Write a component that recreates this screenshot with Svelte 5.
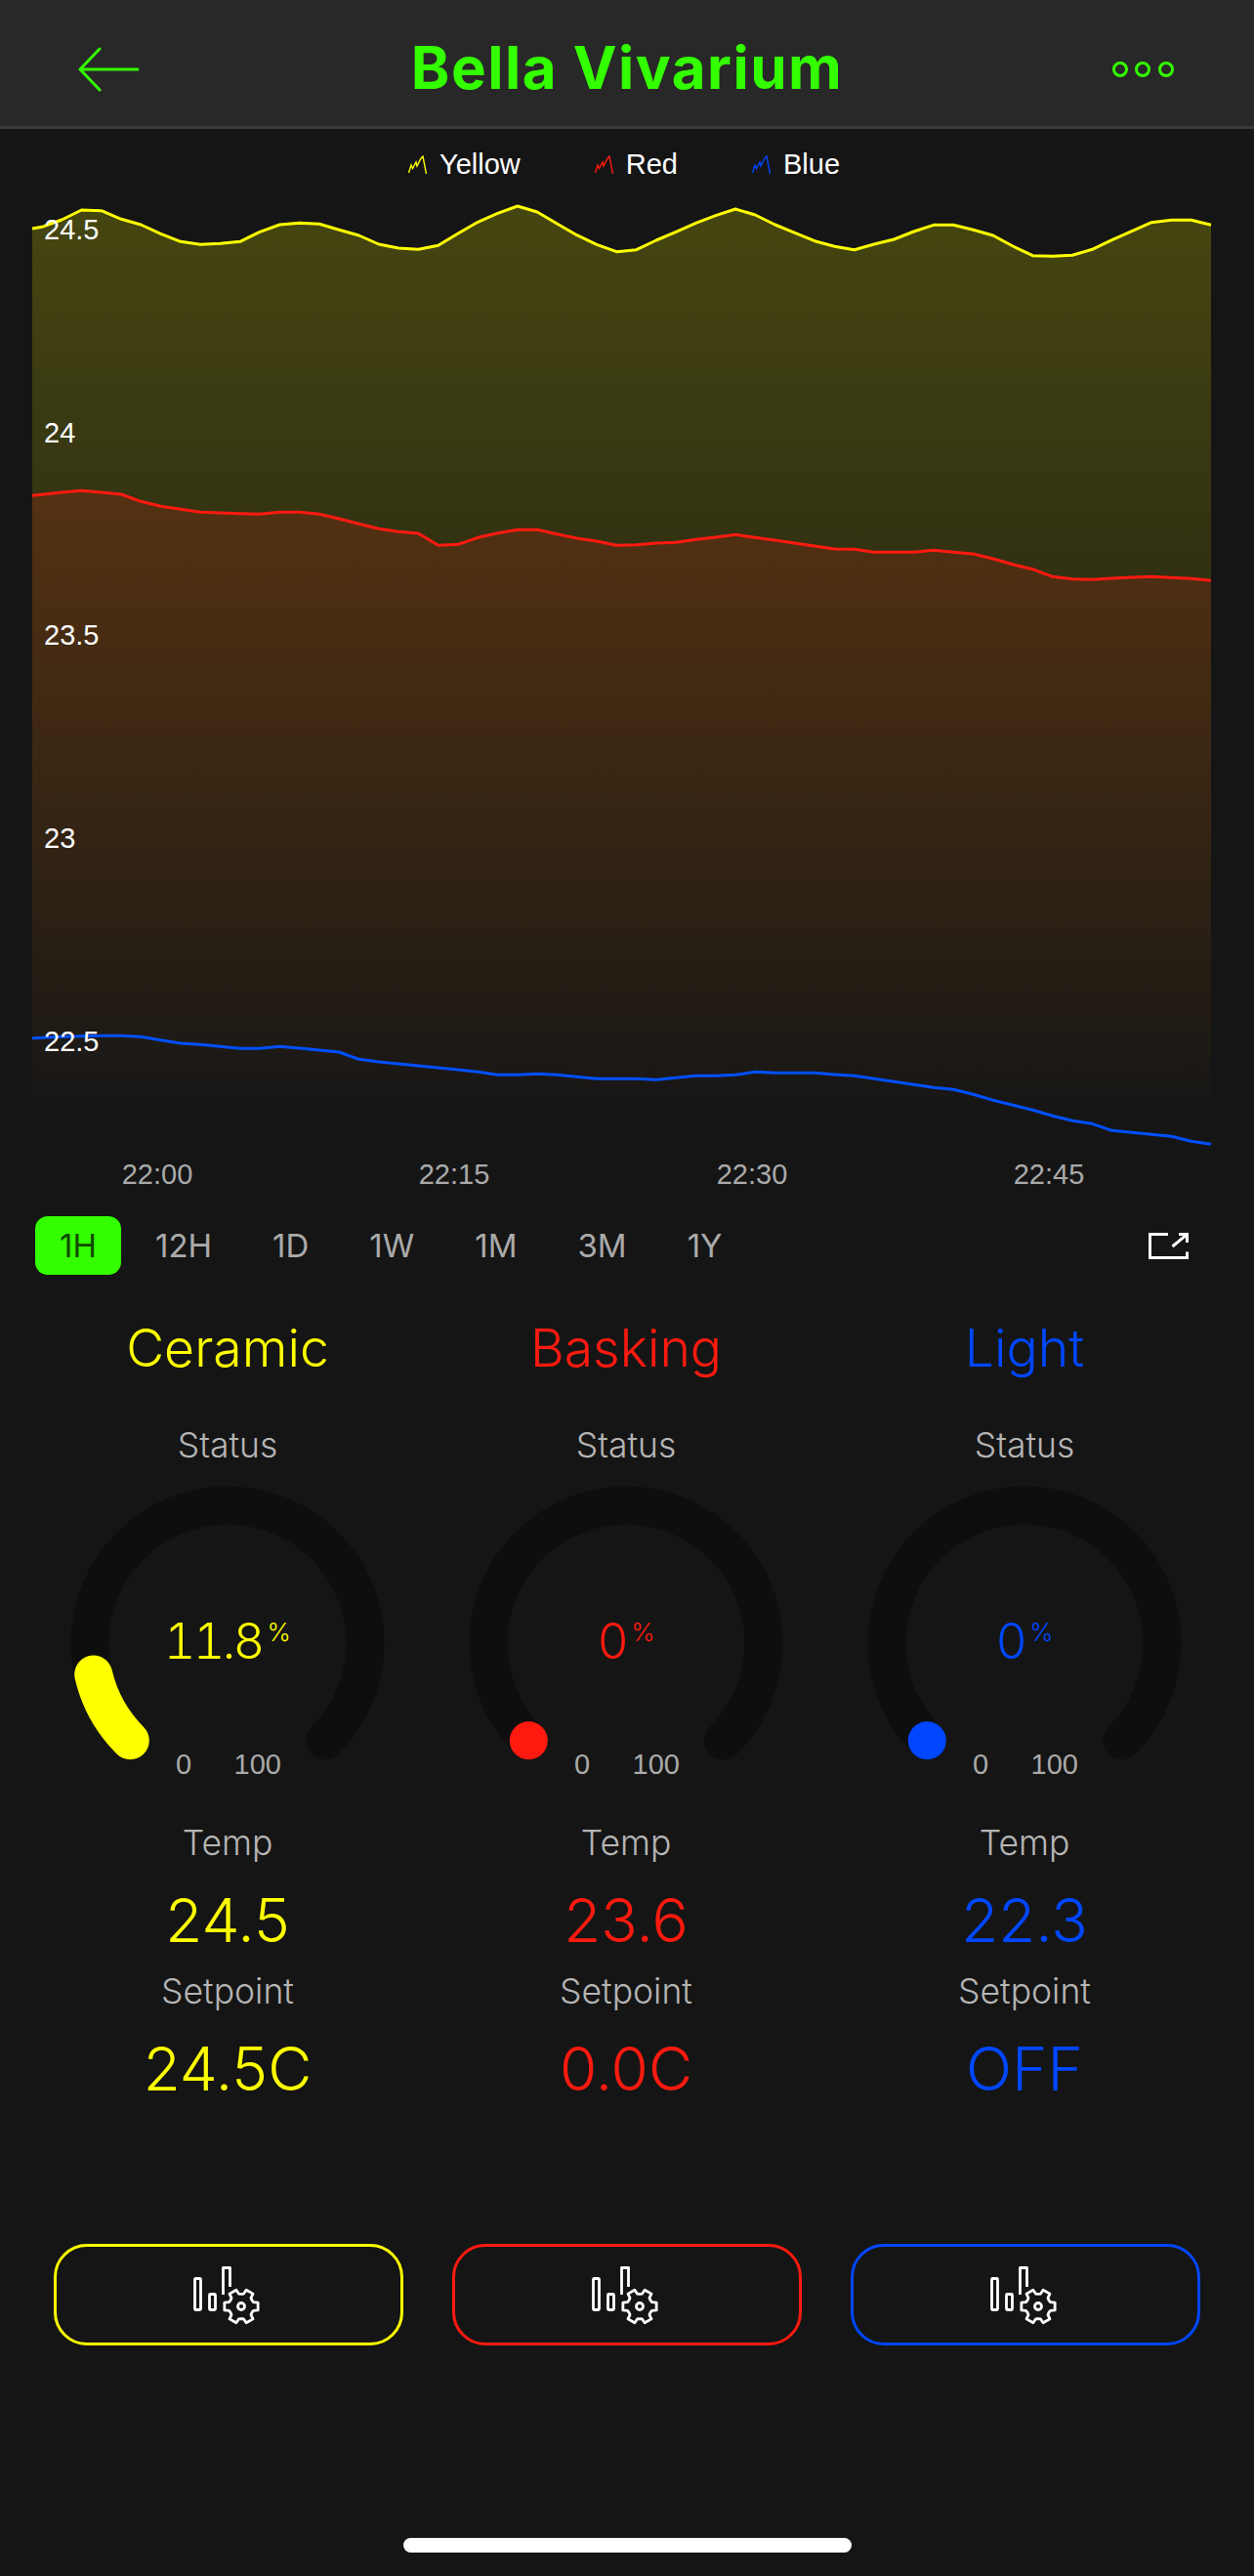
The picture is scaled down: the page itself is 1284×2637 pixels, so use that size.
<script>
  const yellowZ = [97,75,45,47,73,90,118,142,151,148,142,112,90,85,88,106,123,150,162,166,154,117,82,55,33,51,87,122,151,173,167,138,112,85,62,42,60,90,115,140,157,167,150,135,111,91,91,106,123,156,185,187,184,166,137,110,83,76,76,91];
  const redZ = [919,912,907,912,918,940,955,964,973,975,977,979,973,973,979,993,1009,1024,1033,1038,1075,1072,1051,1037,1027,1027,1040,1053,1062,1075,1073,1068,1066,1057,1050,1042,1051,1059,1068,1077,1086,1087,1096,1096,1096,1090,1096,1101,1116,1133,1148,1171,1178,1180,1176,1173,1171,1174,1177,1183];
  const blueZ = [187,184,182,181,181,184,194,204,208,214,220,220,214,219,225,231,253,261,267,273,279,285,292,301,301,298,301,307,313,313,313,316,310,304,304,301,292,295,295,295,300,304,313,322,331,340,346,361,379,394,409,427,442,451,472,478,484,490,505,514];

  const X0 = 42.9;
  const DX = 20.29;
  const LEFT = 33;
  const RIGHT = 1240;
  const BOTTOM = 1160;

  function series(zs, top, first) {
    const pts = zs.map((z, i) => [+(X0 + DX * i).toFixed(1), +(top + z / 3).toFixed(1)]);
    return [[LEFT, top + first / 3], ...pts];
  }
  const toLine = (pts) => pts.map((p) => p.join(',')).join(' ');
  const toArea = (pts) => `${LEFT},${BOTTOM} ${toLine(pts)} ${RIGHT},${BOTTOM}`;

  const lines = [
    { id: 'y', color: '#ffff00', pts: series(yellowZ, 200, 102) },
    { id: 'r', color: '#ff1a10', pts: series(redZ, 200, 922) },
    { id: 'b', color: '#0050ff', pts: series(blueZ, 1000, 188) }
  ];

  const yTicks = [['24.5', 245], ['24', 453], ['23.5', 660], ['23', 868], ['22.5', 1076]];
  const xTicks = [['22:00', 161], ['22:15', 465], ['22:30', 770], ['22:45', 1074]];
  const legend = [['Yellow', '#ffff00'], ['Red', '#ff1a10'], ['Blue', '#0047ff']];
  const ranges = ['1H', '12H', '1D', '1W', '1M', '3M', '1Y'];

  const columns = [
    { name: 'Ceramic', color: '#ffff00', pct: 11.8, value: '11.8', temp: '24.5', setpoint: '24.5C' },
    { name: 'Basking', color: '#ff1a10', pct: 0, value: '0', temp: '23.6', setpoint: '0.0C' },
    { name: 'Light', color: '#0047ff', pct: 0, value: '0', temp: '22.3', setpoint: 'OFF' }
  ];

  const CX = 204;
  const CY = 171;
  const R = 141;
  function polar(deg) {
    const a = (deg * Math.PI) / 180;
    return [+(CX + R * Math.cos(a)).toFixed(2), +(CY + R * Math.sin(a)).toFixed(2)];
  }
  function arc(from, to) {
    const [x1, y1] = polar(from);
    const [x2, y2] = polar(to);
    if (to === from) return `M${x1} ${y1}L${x2} ${y2}`;
    return `M${x1} ${y1}A${R} ${R} 0 ${to - from > 180 ? 1 : 0} 1 ${x2} ${y2}`;
  }
  const track = arc(135, 405);
  const progress = (p) => arc(135, 135 + 2.7 * p);

  function gear(cx, cy) {
    const out = [];
    for (let i = 0; i < 6; i++) {
      const t = i * 60;
      for (const [r, d] of [[12.6, -30], [13.2, -19], [17.6, -13], [17.6, 13], [13.2, 19]]) {
        const a = ((t + d) * Math.PI) / 180;
        out.push(`${(cx + r * Math.cos(a)).toFixed(2)} ${(cy + r * Math.sin(a)).toFixed(2)}`);
      }
    }
    return 'M' + out.join('L') + 'Z';
  }
  const gearPath = gear(49, 44);
</script>

<div class="screen">
  <header class="bar">
    <svg class="back" viewBox="0 0 64 46" width="64" height="46" aria-hidden="true">
      <path d="M23 2 3 23 23 44M3 23H62" />
    </svg>
    <h1>Bella Vivarium</h1>
    <svg class="more" viewBox="0 0 64 20" width="64" height="20" aria-hidden="true">
      <circle cx="9" cy="10" r="6.5" />
      <circle cx="32" cy="10" r="6.5" />
      <circle cx="56" cy="10" r="6.5" />
    </svg>
  </header>

  <div class="legend">
    {#each legend as [label, color]}
      <div class="legend-item">
        <svg viewBox="0 0 19 19" width="19" height="19" aria-hidden="true">
          <path d="M0.5 18 3 10 4.5 13.5 8 7 9 11 12.5 4 15 1 18.5 19" stroke={color} />
        </svg>
        <span>{label}</span>
      </div>
    {/each}
  </div>

  <svg class="chart" viewBox="0 198 1284 1032" width="1284" height="1032">
    <defs>
      <linearGradient id="gy" gradientUnits="userSpaceOnUse" x1="0" y1="210" x2="0" y2="1155">
        <stop offset="0" stop-color="#ffff00" stop-opacity="0.21" />
        <stop offset="0.33" stop-color="#ffff00" stop-opacity="0.135" />
        <stop offset="0.84" stop-color="#ffff00" stop-opacity="0.035" />
        <stop offset="1" stop-color="#ffff00" stop-opacity="0" />
      </linearGradient>
      <linearGradient id="gr" gradientUnits="userSpaceOnUse" x1="0" y1="500" x2="0" y2="1155">
        <stop offset="0" stop-color="#ff1a10" stop-opacity="0.155" />
        <stop offset="0.77" stop-color="#ff1a10" stop-opacity="0.032" />
        <stop offset="1" stop-color="#ff1a10" stop-opacity="0" />
      </linearGradient>
      <linearGradient id="gb" gradientUnits="userSpaceOnUse" x1="0" y1="1050" x2="0" y2="1150">
        <stop offset="0" stop-color="#0050ff" stop-opacity="0.01" />
        <stop offset="1" stop-color="#0050ff" stop-opacity="0" />
      </linearGradient>
    </defs>
    {#each lines as l}
      <polygon points={toArea(l.pts)} fill="url(#g{l.id})" />
    {/each}
    {#each lines as l}
      <polyline class="line" points={toLine(l.pts)} stroke={l.color} />
    {/each}
    {#each yTicks as [t, y]}
      <text class="ytick" x="45" {y}>{t}</text>
    {/each}
    {#each xTicks as [t, x]}
      <text class="xtick" {x} y="1212">{t}</text>
    {/each}
  </svg>

  <div class="ranges">
    <div class="range-list">
      {#each ranges as r, i}
        <span class="range" class:active={i === 0}>{r}</span>
      {/each}
    </div>
    <svg class="expand" viewBox="0 0 41 27" width="41" height="27" aria-hidden="true">
      <path d="M20 1.5H1.5V25.5H39.5V19.5M24.5 14 39.5 1.5M31 1.5H39.5V10" />
    </svg>
  </div>

  <div class="columns">
    {#each columns as c}
      <section class="col" style="--c:{c.color}">
        <h2>{c.name}</h2>
        <div class="label status">Status</div>
        <div class="gauge">
          <svg viewBox="0 0 408 330" width="408" height="330" aria-hidden="true">
            <path class="track" d={track} />
            <path class="prog" d={progress(c.pct)} stroke={c.color} />
          </svg>
          <div class="reading"><span>{c.value}</span><sup>%</sup></div>
          <div class="scale"><span>0</span><span>100</span></div>
        </div>
        <div class="label temp">Temp</div>
        <div class="big">{c.temp}</div>
        <div class="label setpoint">Setpoint</div>
        <div class="big">{c.setpoint}</div>
        <button class="btn" aria-label="{c.name} settings">
          <svg viewBox="0 0 72 64" width="72" height="64" aria-hidden="true">
            <rect x="1.5" y="15.5" width="6" height="32" rx="1" />
            <rect x="16.5" y="31.5" width="6" height="16" rx="1" />
            <path d="M30.5 32V4.5H37.5V24" />
            <path d={gearPath} />
            <circle cx="49" cy="44" r="3.5" />
          </svg>
        </button>
      </section>
    {/each}
  </div>

  <div class="home"></div>
</div>

<style>
  :global(body) {
    margin: 0;
    background: #151515;
  }
  .screen {
    width: 1284px;
    height: 2637px;
    background: #151515;
    overflow: hidden;
    position: relative;
    font-family: "Inter", "Liberation Sans", sans-serif;
    color: #fff;
  }
  .bar {
    background: #282828;
    border-bottom: 3px solid #3a3a3a;
    display: flex;
    align-items: center;
    justify-content: space-between;
    padding: 13px 82px 0 79px;
    box-sizing: content-box;
    height: 116px;
    position: relative;
  }
  .bar h1 {
    margin: 0;
    font-size: 60px;
    line-height: 70px;
    font-weight: 700;
    letter-spacing: 1.5px;
    color: #33ff00;
    position: absolute;
    left: 0;
    right: 0;
    top: 34px;
    text-align: center;
  }
  .back path {
    fill: none;
    stroke: #33ff00;
    stroke-width: 3;
    stroke-linecap: round;
    stroke-linejoin: round;
  }
  .more circle {
    fill: none;
    stroke: #33ff00;
    stroke-width: 3;
  }
  .legend {
    height: 66px;
    display: flex;
    justify-content: center;
    gap: 76px;
    padding: 19px 6px 0 0;
    box-sizing: border-box;
    font-family: "Liberation Sans", sans-serif;
    font-size: 29px;
    line-height: 34px;
  }
  .legend-item {
    display: flex;
    align-items: center;
    gap: 13px;
    height: 34px;
  }
  .legend-item path {
    fill: none;
    stroke-width: 1.4;
  }
  .chart {
    display: block;
  }
  .line {
    fill: none;
    stroke-width: 3;
    stroke-linejoin: round;
  }
  .ytick {
    font-family: "Liberation Sans", sans-serif;
    font-size: 29px;
    fill: #fff;
  }
  .xtick {
    font-family: "Liberation Sans", sans-serif;
    font-size: 29px;
    fill: #aaa;
    text-anchor: middle;
  }
  .ranges {
    height: 60px;
    margin-top: 15px;
    padding: 0 67px 0 36px;
    display: flex;
    align-items: center;
    justify-content: space-between;
  }
  .range-list {
    display: flex;
    gap: 12px;
  }
  .range {
    height: 60px;
    line-height: 60px;
    padding: 0 25px;
    font-size: 33px;
    color: #aaa;
    border-radius: 13px;
  }
  .range:nth-child(1) {
    margin-right: -2px;
  }
  .range.active {
    background: #33ff00;
    color: #114a00;
  }
  .expand path {
    fill: none;
    stroke: #fff;
    stroke-width: 3;
  }
  .columns {
    display: grid;
    grid-template-columns: repeat(3, 408px);
    padding-left: 29px;
  }
  .col {
    display: flex;
    flex-direction: column;
    align-items: center;
    position: relative;
  }
  h2 {
    margin: 45px 0 0;
    font-size: 53.5px;
    line-height: 60px;
    font-weight: 300;
    color: var(--c);
  }
  .label {
    font-size: 35.5px;
    line-height: 40px;
    font-weight: 300;
    color: #b5b5b5;
  }
  .status {
    margin-top: 50px;
  }
  .gauge {
    position: relative;
    width: 408px;
    height: 330px;
    margin-top: 11px;
  }
  .gauge svg {
    display: block;
  }
  .track,
  .prog {
    fill: none;
    stroke-width: 39;
    stroke-linecap: round;
  }
  .track {
    stroke: #0e0e0e;
  }
  .reading {
    position: absolute;
    left: 0;
    right: 0;
    top: 140px;
    display: flex;
    justify-content: center;
    align-items: flex-start;
    color: var(--c);
    font-size: 50px;
    line-height: 58px;
    font-weight: 300;
    font-variant-numeric: tabular-nums;
    letter-spacing: -2.5px;
  }
  .reading sup {
    font-size: 26px;
    line-height: 28px;
    vertical-align: baseline;
    margin: 6px 0 0 5px;
    letter-spacing: 0;
  }
  .scale {
    position: absolute;
    left: 151px;
    top: 278px;
    width: 108px;
    display: flex;
    justify-content: space-between;
    font-family: "Liberation Sans", sans-serif;
    font-size: 29px;
    line-height: 34px;
    color: #aaa;
  }
  .temp {
    margin-top: 26px;
  }
  .setpoint {
    margin-top: 16px;
  }
  .big {
    font-size: 62px;
    line-height: 74px;
    font-weight: 300;
    color: var(--c);
    margin-top: 22px;
  }
  .btn {
    width: 358px;
    height: 104px;
    margin: 142px 0 0 2px;
    padding: 0;
    background: transparent;
    border: 3px solid var(--c);
    border-radius: 34px;
    display: flex;
    align-items: center;
    justify-content: center;
    box-sizing: border-box;
  }
  .btn svg * {
    fill: none;
    stroke: #fff;
    stroke-width: 2.8;
    stroke-linejoin: round;
  }
  .home {
    position: absolute;
    left: 413px;
    top: 2598px;
    width: 459px;
    height: 15px;
    border-radius: 8px;
    background: #fff;
  }
</style>
